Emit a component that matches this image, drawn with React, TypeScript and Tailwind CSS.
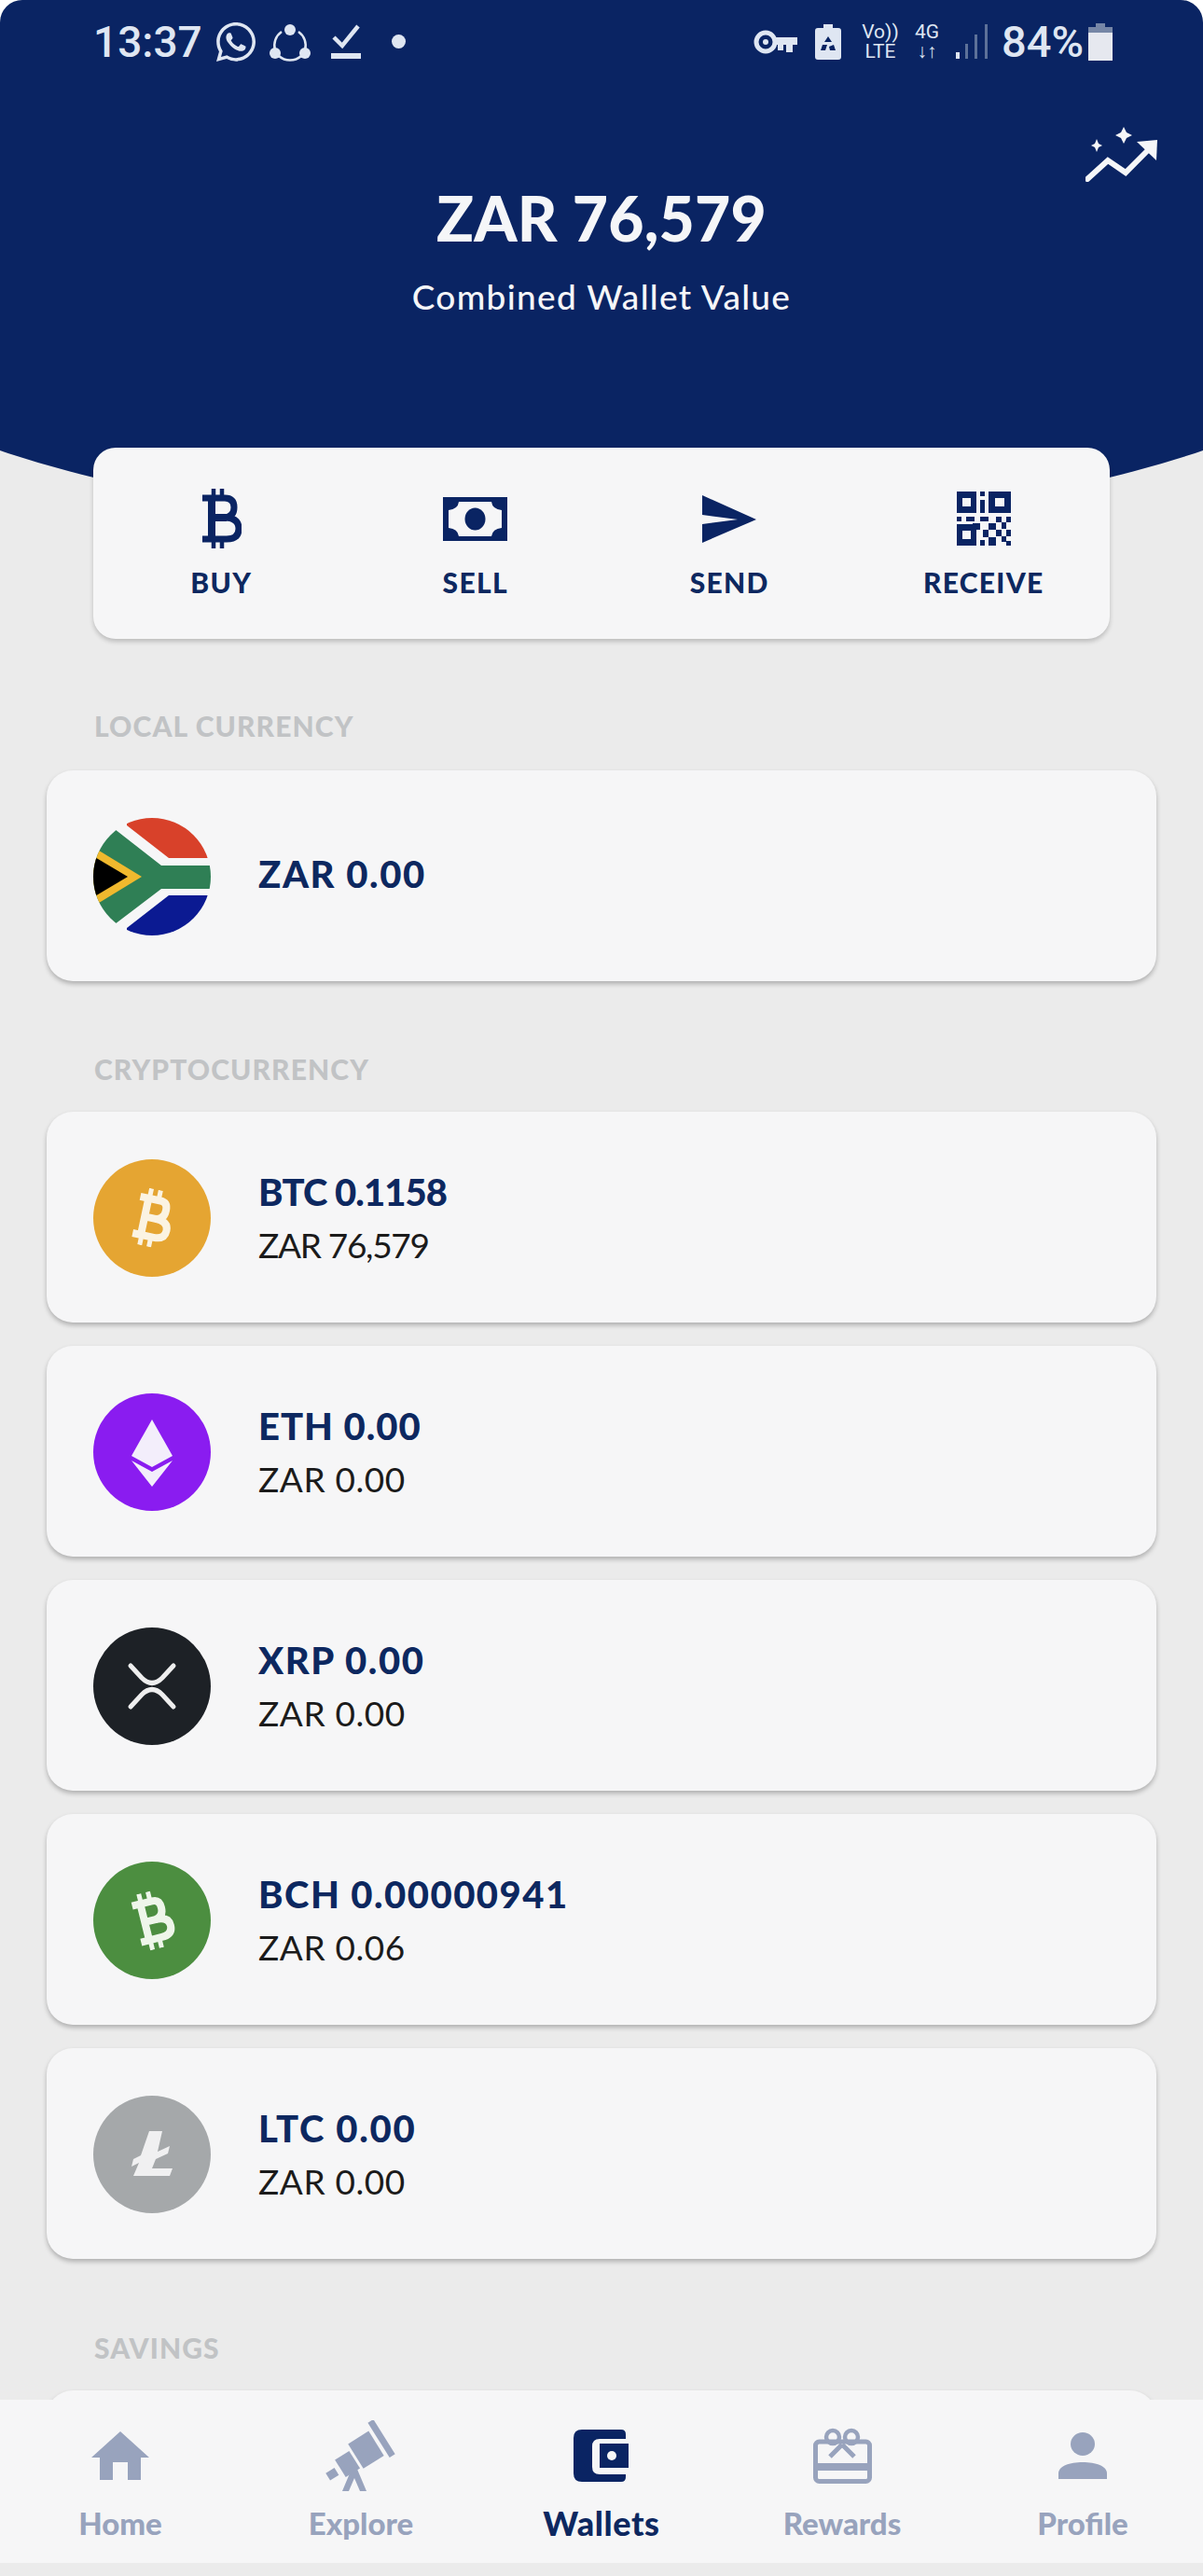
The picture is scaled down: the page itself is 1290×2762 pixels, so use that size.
import React from "react";
import { FaWhatsapp } from "react-icons/fa";

const NAVY = "#0a2463";

function Shareit() {
  return (
    <svg width="44" height="42" viewBox="0 0 44 42" fill="none">
      <path d="M13 10 A18 18 0 0 0 6 30 M31 10 A18 18 0 0 1 38 30 M10 36 A18 18 0 0 0 34 36" stroke="#dfe6f2" strokeWidth="2.5" />
      <circle cx="22" cy="8" r="6" fill="#dfe6f2" />
      <circle cx="6" cy="33" r="6" fill="#dfe6f2" />
      <circle cx="38" cy="33" r="6" fill="#dfe6f2" />
    </svg>
  );
}

function CheckLine() {
  return (
    <svg width="32" height="40" viewBox="0 0 32 40" fill="none">
      <path d="M3 15 L12 24 L29 3" stroke="#dfe6f2" strokeWidth="4.5" />
      <rect x="0" y="32" width="32" height="6" fill="#dfe6f2" />
    </svg>
  );
}

function KeyIcon() {
  return (
    <svg width="47" height="26" viewBox="0 0 47 26" fill="none">
      <circle cx="13" cy="13" r="10" stroke="#dfe6f2" strokeWidth="5" />
      <circle cx="13" cy="13" r="3" fill="#dfe6f2" />
      <path d="M21 8 H47 V16 H42 V24 H35 V16 H32 V22 H26 V16 H21 Z" fill="#dfe6f2" />
    </svg>
  );
}

function BatteryRecycle() {
  return (
    <svg width="28" height="38" viewBox="0 0 28 38">
      <path d="M9 0 H19 V4 H25 Q28 4 28 7 V35 Q28 38 25 38 H3 Q0 38 0 35 V7 Q0 4 3 4 H9 Z" fill="#dfe6f2" />
      <path d="M14 13 L18 19 H10 Z M8 22 L13 22 L11 28 H6 Z M20 22 L22 28 H16 L15 24 Z" fill={NAVY} />
    </svg>
  );
}

function Signal() {
  return (
    <svg width="34" height="38" viewBox="0 0 34 38">
      <rect x="0" y="30" width="4" height="7" fill="#dfe6f2" />
      <rect x="10" y="21" width="3" height="16" fill="#5d7199" />
      <rect x="20" y="11" width="3" height="26" fill="#5d7199" />
      <rect x="31" y="0" width="3" height="37" fill="#5d7199" />
    </svg>
  );
}

function Battery() {
  return (
    <svg width="26" height="40" viewBox="0 0 26 40">
      <path d="M8 0 H18 V4 H26 V40 H0 V4 H8 Z" fill="#7686a6" />
      <rect x="0" y="10" width="26" height="30" fill="#e6e8ef" />
    </svg>
  );
}

function Trend() {
  return (
    <svg width="77" height="60" viewBox="0 0 77 60" fill="none">
      <path d="M2 57 L24 37 L43 50 L67 26" stroke="#f5f6f8" strokeWidth="6" strokeLinecap="round" />
      <path d="M55 17 L77 15 L76 37 Z" fill="#f5f6f8" />
      <path d="M41 1 L44 7 L50 10 L44 13 L41 19 L38 13 L32 10 L38 7 Z" fill="#f5f6f8" />
      <path d="M12 14 L14 19 L18 21 L14 23 L12 28 L10 23 L6 21 L10 19 Z" fill="#f5f6f8" />
    </svg>
  );
}

function BuyIcon() {
  return (
    <svg width="44" height="64" viewBox="0 0 44 64" fill="none">
      <path d="M14 0 V10 M23 0 V10 M14 54 V64 M23 54 V64" stroke={NAVY} strokeWidth="4.5" />
      <path d="M2 10 H26 Q36 10 36 20 Q36 30 26 31 Q41 31 41 43 Q41 54 28 54 H2" stroke={NAVY} strokeWidth="7" />
      <path d="M12 10 V54 M12 31 H28" stroke={NAVY} strokeWidth="8" />
    </svg>
  );
}

function CoinB({ color, angle }: { color: string; angle: number }) {
  return (
    <svg width="60" height="62" viewBox="0 0 44 62" fill="none" style={{ transform: `rotate(${angle}deg)` }}>
      <path d="M15 0 V10 M25 0 V10 M15 52 V62 M25 52 V62" stroke={color} strokeWidth="5" />
      <path d="M5 11 H27 Q35 11 35 20 Q35 30 26 31 Q40 31 40 41 Q40 51 28 51 H5" stroke={color} strokeWidth="8" />
      <path d="M14 10 V52 M14 31 H27" stroke={color} strokeWidth="8" />
    </svg>
  );
}

function SellIcon() {
  return (
    <svg width="69" height="47" viewBox="0 0 69 47">
      <rect width="69" height="47" fill={NAVY} />
      <path d="M17 5 H52 Q53 13 63 14 V33 Q53 34 52 42 H17 Q16 34 6 33 V14 Q16 13 17 5 Z" fill="#f6f6f7" />
      <ellipse cx="34.5" cy="23.5" rx="11" ry="12" fill={NAVY} />
    </svg>
  );
}

function SendIcon() {
  return (
    <svg width="58" height="51" viewBox="0 0 58 51">
      <path d="M0 0 L58 26 L0 51 V31 L38 26 L0 21 Z" fill={NAVY} />
    </svg>
  );
}

function QrIcon() {
  const bits = [
    [25, 0, 5, 5], [25, 9, 5, 14], [0, 27, 5, 5], [10, 27, 9, 5], [25, 27, 9, 5], [42, 27, 6, 6],
    [53, 27, 5, 6], [0, 36, 5, 5], [17, 34, 8, 7], [34, 34, 8, 7], [48, 33, 5, 7], [28, 41, 6, 8],
    [42, 41, 6, 7], [53, 41, 5, 7], [34, 49, 8, 9], [48, 48, 5, 6], [25, 52, 5, 6], [53, 53, 5, 5],
  ];
  return (
    <svg width="58" height="58" viewBox="0 0 58 58" fill={NAVY}>
      <path fillRule="evenodd" d="M0 0 H21 V23 H0 Z M6 7 V16 H15 V7 Z" />
      <path fillRule="evenodd" d="M34 0 H58 V23 H34 Z M41 7 V16 H51 V7 Z" />
      <path fillRule="evenodd" d="M0 35 H21 V58 H0 Z M6 42 V51 H15 V42 Z" />
      {bits.map((b, i) => (
        <rect key={i} x={b[0]} y={b[1]} width={b[2]} height={b[3]} />
      ))}
    </svg>
  );
}

function Flag() {
  return (
    <svg width="126" height="126" viewBox="0 0 126 126" className="rounded-full">
      <rect width="126" height="126" fill="#f6f6f7" />
      <polygon points="36,8 81,43 130,43 130,-5 36,-5" fill="#d8412a" />
      <polygon points="36,118 81,83 130,83 130,131 36,131" fill="#0b1a92" />
      <polygon points="73,51 23,12 -10,-12 -10,138 23,114 73,76 130,76 130,51" fill="#2f7f55" />
      <polygon points="52,63 -10,25 -10,101" fill="#f0b92e" />
      <polygon points="37,63 -10,35 -10,91" fill="#000000" />
    </svg>
  );
}

function EthGlyph() {
  return (
    <svg width="126" height="126" viewBox="0 0 126 126">
      <polygon points="63,28 85,67 63,79 41,67" fill="#f3eefb" />
      <polygon points="41,72 63,84 85,72 63,100" fill="#f3eefb" />
    </svg>
  );
}

function XrpGlyph() {
  return (
    <svg width="126" height="126" viewBox="0 0 126 126" fill="none">
      <path d="M40 41 L52 54 Q63 65 74 54 L86 41" stroke="#eeeeee" strokeWidth="5" strokeLinecap="round" />
      <path d="M40 85 L52 72 Q63 61 74 72 L86 85" stroke="#eeeeee" strokeWidth="5" strokeLinecap="round" />
    </svg>
  );
}

function LtcGlyph() {
  return (
    <svg width="126" height="126" viewBox="0 0 126 126">
      <path d="M60 38 H74 L69 60 L82 54 L80 62 L67 68 L63 78 H85 L82 86 H43 L49 72 L41 76 L43 68 L51 64 Z" fill="#f0f0f1" />
    </svg>
  );
}

const coins = [
  { name: "BTC 0.1158", sub: "ZAR 76,579", bg: "bg-[#e5a532]", nameTrack: "tracking-[-0.9px]", subTrack: "tracking-[-1.3px]", icon: <CoinB color="#fbf3e2" angle={12} /> },
  { name: "ETH 0.00", sub: "ZAR 0.00", bg: "bg-[#8a1cf0]", nameTrack: "tracking-[1px]", subTrack: "tracking-[0.6px]", icon: <EthGlyph /> },
  { name: "XRP 0.00", sub: "ZAR 0.00", bg: "bg-[#1d2126]", nameTrack: "tracking-[1.6px]", subTrack: "tracking-[0.6px]", icon: <XrpGlyph /> },
  { name: "BCH 0.00000941", sub: "ZAR 0.06", bg: "bg-[#4c8e40]", nameTrack: "tracking-[1.5px]", subTrack: "tracking-[0.6px]", icon: <CoinB color="#eef6ea" angle={-14} /> },
  { name: "LTC 0.00", sub: "ZAR 0.00", bg: "bg-[#a5a8aa]", nameTrack: "tracking-[1.7px]", subTrack: "tracking-[0.6px]", icon: <LtcGlyph /> },
];

const actions = [
  { label: "BUY", icon: <BuyIcon /> },
  { label: "SELL", icon: <SellIcon /> },
  { label: "SEND", icon: <SendIcon /> },
  { label: "RECEIVE", icon: <QrIcon /> },
];

function HomeIcon() {
  return (
    <svg width="62" height="52" viewBox="0 0 62 52" fill="#98a3bd">
      <path d="M31 0 L62 28 H53 V52 H39 V33 H23 V52 H9 V28 H0 Z" />
    </svg>
  );
}

function TelescopeIcon() {
  return (
    <svg width="76" height="76" viewBox="0 0 76 76" fill="#98a3bd">
      <g transform="rotate(-32 38 38)">
        <rect x="-4" y="34" width="11" height="9" />
        <rect x="12" y="27" width="18" height="22" />
        <rect x="33" y="20" width="26" height="31" />
        <rect x="63" y="12" width="7" height="44" />
      </g>
      <path d="M24 52 L33 50 L44 76 H37 L31 62 L25 76 H18 L26 57 Z" />
    </svg>
  );
}

function WalletIcon() {
  return (
    <svg width="60" height="56" viewBox="0 0 60 56">
      <path d="M9 0 H51 Q56 0 56 5 V10 H28 Q20 10 20 18 V40 Q20 48 28 48 H56 V51 Q56 56 51 56 H9 Q0 56 0 47 V9 Q0 0 9 0 Z" fill={NAVY} />
      <rect x="28" y="15" width="31" height="26" fill={NAVY} />
      <circle cx="41" cy="28" r="5" fill="#f6f6f7" />
    </svg>
  );
}

function RewardsIcon() {
  return (
    <svg width="63" height="60" viewBox="0 0 63 60" fill="none" stroke="#98a3bd">
      <rect x="2.5" y="15" width="58" height="42.5" rx="4" strokeWidth="5" />
      <rect x="2" y="38" width="59" height="8" fill="#98a3bd" strokeWidth="0" />
      <path d="M31 18 L18 31 M31 18 L44 31" strokeWidth="5" />
      <ellipse cx="21" cy="10" rx="7" ry="7" strokeWidth="4.5" />
      <ellipse cx="41" cy="10" rx="7" ry="7" strokeWidth="4.5" />
    </svg>
  );
}

function ProfileIcon() {
  return (
    <svg width="52" height="50" viewBox="0 0 52 50" fill="#98a3bd">
      <ellipse cx="26" cy="12.5" rx="13" ry="12.5" />
      <path d="M0 50 V44 C0 36 12 32 26 32 C40 32 52 36 52 44 V50 Z" />
    </svg>
  );
}

const tabs = [
  { label: "Home", icon: <HomeIcon />, active: false },
  { label: "Explore", icon: <TelescopeIcon />, active: false },
  { label: "Wallets", icon: <WalletIcon />, active: true },
  { label: "Rewards", icon: <RewardsIcon />, active: false },
  { label: "Profile", icon: <ProfileIcon />, active: false },
];

function SectionLabel({ children }: { children: React.ReactNode }) {
  return (
    <div className="ml-[101px] h-[30px] text-[30px] leading-[30px] font-black tracking-[1.1px] text-[#c1c3c5]">
      {children}
    </div>
  );
}

function Circle({ bg, children }: { bg: string; children: React.ReactNode }) {
  return (
    <div className={`w-[126px] h-[126px] rounded-full flex items-center justify-center shrink-0 ${bg}`}>{children}</div>
  );
}

function Row({ icon, name, sub, nameTrack, subTrack }: { icon: React.ReactNode; name: string; sub?: string; nameTrack: string; subTrack?: string }) {
  return (
    <div className="mx-[50px] h-[226px] pt-[2px] rounded-[28px] bg-[#f6f6f7] shadow-[0_3px_5px_rgba(0,0,0,0.25)] flex items-center pl-[50px] gap-[51px]">
      {icon}
      <div className={`flex flex-col ${sub ? "" : "mb-[6px]"}`}>
        <div className={`text-[40px] leading-[48px] font-black text-[#0d2860] ${nameTrack}`}>{name}</div>
        {sub && <div className={`mt-[10px] text-[37px] leading-[46px] font-normal text-[#1b1b1b] ${subTrack}`}>{sub}</div>}
      </div>
    </div>
  );
}

export default function App() {
  return (
    <div
      className="w-[1290px] h-[2762px] rounded-t-[24px] overflow-hidden bg-[#ebebeb] flex flex-col"
      style={{ fontFamily: "Lato, 'Open Sans', sans-serif" }}
    >
      <div className="shrink-0 w-[1290px] h-[572px] overflow-hidden">
        <div className="w-[1800px] h-[572px] -ml-[255px] px-[255px] bg-[#0a2463] rounded-b-[50%_294px] text-[#f5f6f8]">
          <div className="h-[88px] flex items-center pl-[100px] pr-[97px] pt-[1px] text-[#dfe6f2]" style={{ fontFamily: "Roboto, sans-serif" }}>
            <span className="text-[46px] leading-none font-medium">13:37</span>
            <FaWhatsapp className="ml-[12px] text-[48px]" />
            <div className="ml-[12px]"><Shareit /></div>
            <div className="ml-[22px]"><CheckLine /></div>
            <div className="ml-[33px] w-[15px] h-[15px] rounded-full bg-[#dfe6f2]" />
            <div className="ml-auto"><KeyIcon /></div>
            <div className="ml-[19px]"><BatteryRecycle /></div>
            <div className="ml-[23px] flex flex-col items-center text-[21px] leading-[21px] w-[38px]">
              <span>Vo))</span>
              <span>LTE</span>
            </div>
            <div className="ml-[17px] flex flex-col items-center text-[21px] leading-[21px] w-[28px]">
              <span>4G</span>
              <span className="font-bold">↓↑</span>
            </div>
            <div className="ml-[17px]"><Signal /></div>
            <span className="ml-[15px] text-[47px] leading-none font-medium">84%</span>
            <div className="ml-[5px]"><Battery /></div>
          </div>
          <div className="flex justify-end pr-[49px] mt-[47px]">
            <Trend />
          </div>
          <div className="-mt-[1px] text-center text-[66px] leading-[80px] font-black tracking-[0.2px]">ZAR 76,579</div>
          <div className="mt-[21px] text-center text-[37px] leading-[46px] font-medium tracking-[1.3px]">Combined Wallet Value</div>
        </div>
      </div>

      <div className="-mt-[92px] shrink-0 mx-[100px] h-[205px] rounded-[24px] bg-[#f6f6f7] shadow-[0_3px_5px_rgba(0,0,0,0.2)] grid grid-cols-4 relative">
        {actions.map((a) => (
          <div key={a.label} className="flex flex-col items-center pt-[43px] pl-[2px]">
            <div className="h-[66px] flex items-center justify-center">{a.icon}</div>
            <div className="mt-[18px] text-[30px] leading-[34px] font-black tracking-[1.3px] text-[#0d2860]">{a.label}</div>
          </div>
        ))}
      </div>

      <div className="flex-1 overflow-hidden">
        <div className="mt-[78px]"><SectionLabel>LOCAL CURRENCY</SectionLabel></div>
        <div className="mt-[33px]">
          <Row icon={<Flag />} name="ZAR 0.00" nameTrack="tracking-[1.6px]" />
        </div>
        <div className="mt-[79px]"><SectionLabel>CRYPTOCURRENCY</SectionLabel></div>
        <div className="mt-[31px] flex flex-col gap-[25px]">
          {coins.map((c) => (
            <Row key={c.name} icon={<Circle bg={c.bg}>{c.icon}</Circle>} name={c.name} sub={c.sub} nameTrack={c.nameTrack} subTrack={c.subTrack} />
          ))}
        </div>
        <div className="mt-[80px]"><SectionLabel>SAVINGS</SectionLabel></div>
        <div className="mt-[31px]">
          <Row icon={<Circle bg="bg-[#f6f6f7]">{null}</Circle>} name="" nameTrack="" />
        </div>
      </div>

      <div className="shrink-0 h-[175px] bg-[#f6f6f7] grid grid-cols-5 relative">
        {tabs.map((t) => (
          <div key={t.label} className="flex flex-col items-center">
            <div className="h-[100px] pt-[20px] flex items-center justify-center">{t.icon}</div>
            <div className={`mt-[12px] leading-[40px] font-black ${t.active ? "text-[36px] tracking-[0.6px] text-[#0d2860]" : "text-[33px] text-[#98a3bd]"}`}>{t.label}</div>
          </div>
        ))}
      </div>
      <div className="shrink-0 h-[14px] bg-[#ebebeb]" />
    </div>
  );
}
